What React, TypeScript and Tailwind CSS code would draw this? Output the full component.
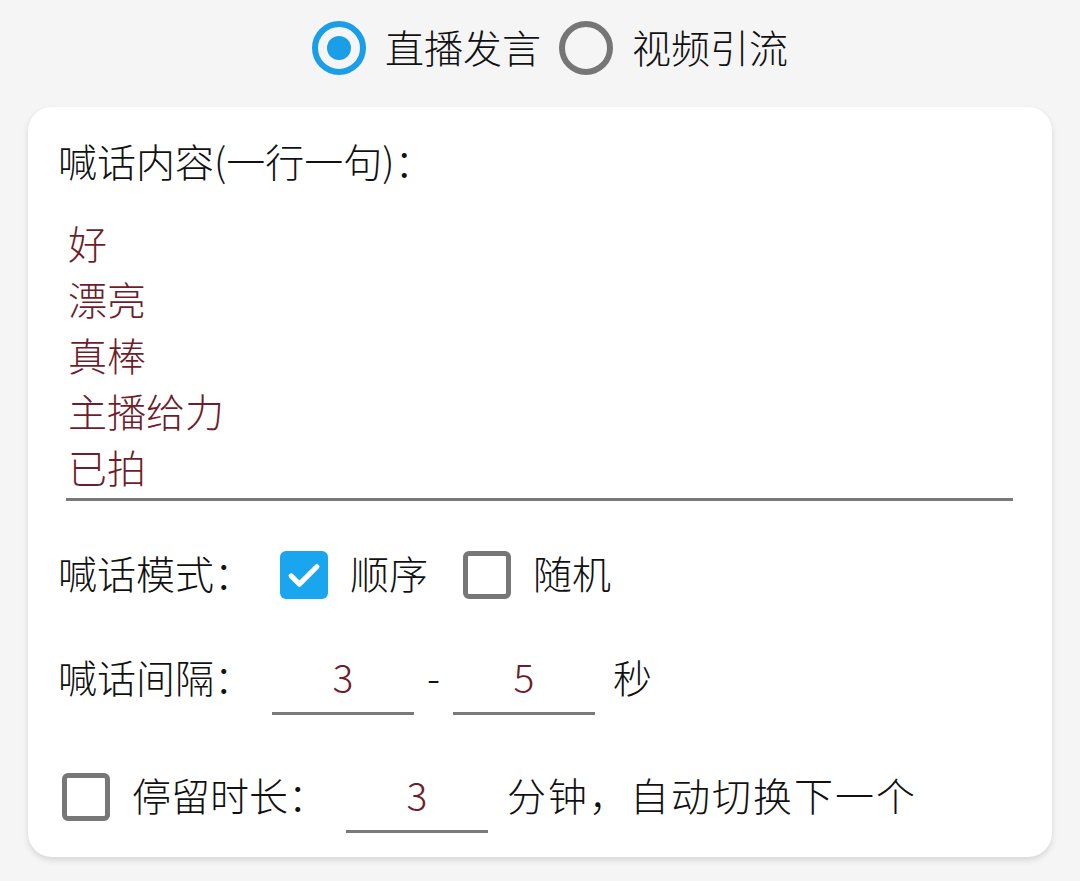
import { useState } from "react";

const FONT = "font-['Noto_Sans_CJK_SC','Noto_Sans',sans-serif]";

function Radio({ checked, label, onClick }: { checked: boolean; label: string; onClick: () => void }) {
  return (
    <button type="button" onClick={onClick} className="flex items-center gap-[19px]">
      <span
        className={
          checked
            ? "flex h-[54px] w-[54px] items-center justify-center rounded-full border-[6px] border-[#1a9ee8]"
            : "flex h-[54px] w-[54px] items-center justify-center rounded-full border-[6px] border-[#767676]"
        }
      >
        {checked && <span className="h-[24px] w-[24px] rounded-full bg-[#1a9ee8]" />}
      </span>
      <span className="pb-[4px] text-[39px] leading-none text-[#111]">{label}</span>
    </button>
  );
}

function Check({ checked }: { checked: boolean }) {
  return checked ? (
    <span className="flex h-[48px] w-[48px] items-center justify-center rounded-[6px] bg-[#1aa5ef]">
      <svg viewBox="0 0 24 24" className="h-[44px] w-[44px]" fill="none" stroke="white" strokeWidth="2.8" strokeLinecap="round" strokeLinejoin="round">
        <path d="M5 12.5l4.5 4.5L19 7.5" />
      </svg>
    </span>
  ) : (
    <span className="block h-[48px] w-[48px] rounded-[6px] border-[5px] border-[#777]" />
  );
}

function NumField({ value }: { value: string }) {
  return (
    <div className="flex h-[66px] w-[142px] items-center justify-center border-b-[3px] border-[#7a7a7a] pb-[8px] text-[39px] leading-none text-[#6e1d2b]">
      {value}
    </div>
  );
}

export default function App() {
  const [mode, setMode] = useState<"live" | "video">("live");
  const lines = ["好", "漂亮", "真棒", "主播给力", "已拍"];

  return (
    <div className={`min-h-screen bg-[#f5f5f5] font-light ${FONT}`}>
      <div className="flex h-[96px] items-center justify-center gap-[18px] pl-[20px]">
        <Radio checked={mode === "live"} label="直播发言" onClick={() => setMode("live")} />
        <Radio checked={mode === "video"} label="视频引流" onClick={() => setMode("video")} />
      </div>

      <div className="mx-[28px] mt-[11px] rounded-[24px] bg-white pb-[24px] pl-[30px] pr-[39px] pt-[28px] text-[39px] leading-none text-[#111] shadow-[0_3px_6px_rgba(0,0,0,0.13)]">
        <div className="h-[50px] leading-[50px]">喊话内容(一行一句)：</div>

        {/* textarea-like block */}
        <div className="ml-[8px] mt-[29px] border-b-[3px] border-[#7a7a7a] pl-[2px] pb-[4px]">
          {lines.map((l) => (
            <div key={l} className="h-[56px] leading-[56px] text-[#6e1d2b]">
              {l}
            </div>
          ))}
        </div>

        <div className="mt-[50px] flex h-[48px] items-center">
          <span className="w-[222px] pb-[6px]">喊话模式：</span>
          <Check checked />
          <span className="ml-[22px] pb-[6px]">顺序</span>
          <span className="ml-[35px]">
            <Check checked={false} />
          </span>
          <span className="ml-[22px] pb-[6px]">随机</span>
        </div>

        <div className="mt-[50px] flex items-baseline">
          <span className="w-[214px]">喊话间隔：</span>
          <NumField value="3" />
          <span className="w-[39px] text-center">-</span>
          <NumField value="5" />
          <span className="ml-[18px]">秒</span>
        </div>

        <div className="mt-[52px] flex items-baseline">
          <span className="ml-[4px] self-center pb-[6px]">
            <Check checked={false} />
          </span>
          <span className="ml-[22px] w-[214px]">停留时长：</span>
          <NumField value="3" />
          <span className="ml-[19px] tracking-[2px]">分钟，自动切换下一个</span>
        </div>
      </div>
    </div>
  );
}
